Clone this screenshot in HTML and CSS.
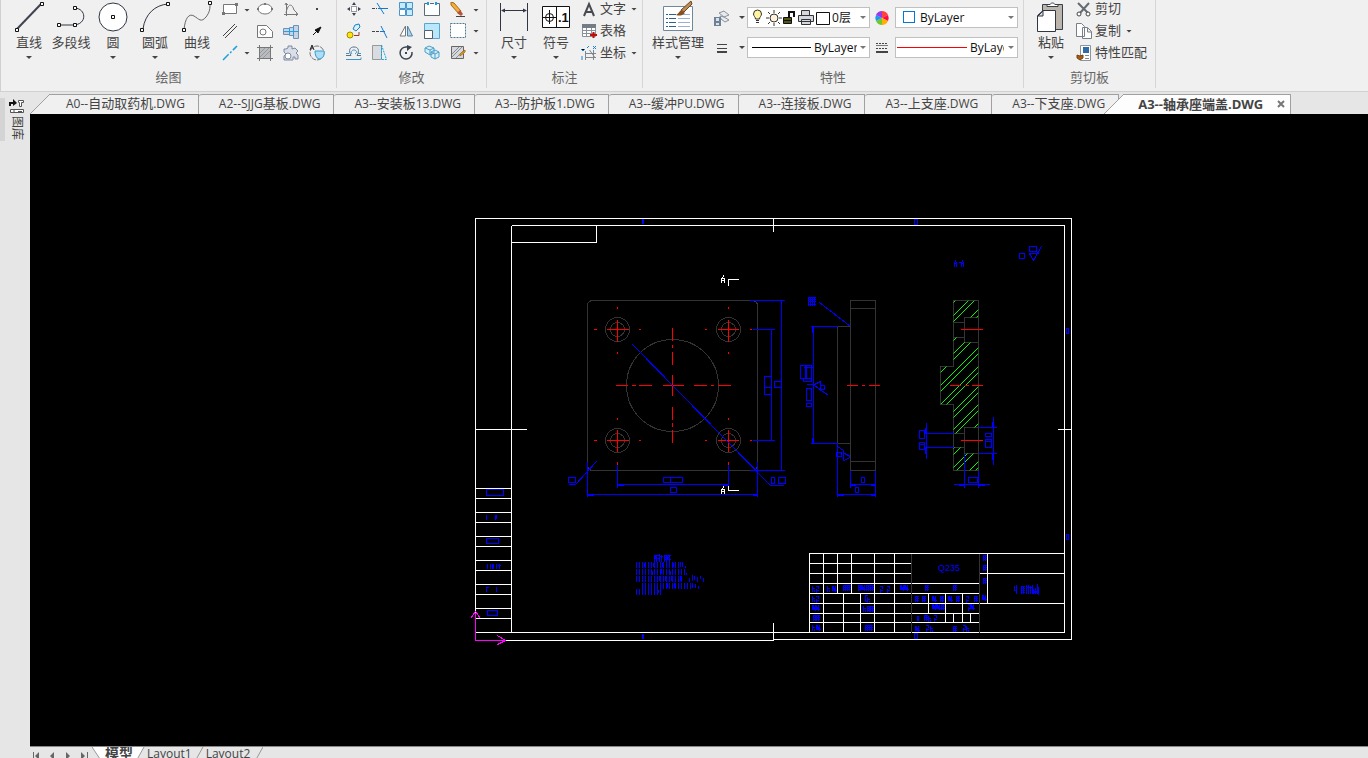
FILE: index.html
```html
<!DOCTYPE html>
<html lang="zh-CN">
<head>
<meta charset="utf-8">
<title>A3--轴承座端盖.DWG</title>
<link rel="stylesheet" href="styles.css">
</head>
<body>
<header class="ribbon">
  <section class="group">
    <div class="group-body draw-body">
      <button class="big"><svg width="30" height="32" viewBox="0 0 30 32"><path class="ink2" d="M3 29L27 4"/><path class="node" d="M1.500 28.500h3v3h-3zM26.500 2.500h3v3h-3z"/></svg><span>直线</span><i class="arrow"></i></button>
      <button class="big"><svg width="30" height="32" viewBox="0 0 30 32"><path class="ink" d="M2 25h15M19 8c12 1 12 17-2 17"/><path class="node" d="M1.500 23.500h3v3h-3zM17.500 23.500h3v3h-3zM17.500 6.500h3v3h-3z"/></svg><span>多段线</span></button>
      <button class="big"><svg width="30" height="32" viewBox="0 0 30 32"><circle class="ink" cx="15" cy="17" r="14"/><path class="node" d="M13.500 15.500h3v3h-3z"/></svg><span>圆</span><i class="arrow"></i></button>
      <button class="big"><svg width="30" height="32" viewBox="0 0 30 32"><path class="ink" d="M3 29C5 14 15 5 28 4"/><path class="node" d="M.500 28.500h3v3h-3zM26.500 2.500h3v3h-3z"/></svg><span>圆弧</span><i class="arrow"></i></button>
      <button class="big"><svg width="30" height="32" viewBox="0 0 30 32"><path class="ink gray-ink" d="M2 30C3 18 7 13 12 16C17 19 19 23 24 17C28 12 28 8 28 4"/><path class="node" d="M.500 28.500h3v3h-3zM26.500 1.500h3v3h-3z"/></svg><span>曲线</span><i class="arrow"></i></button>
      <div class="icons draw-icons">
        <button class="small" aria-label="矩形"><svg width="16" height="16"><path class="thin" fill="#fff" d="M1.500 2.500h13v9h-13z"/><path class="dot" d="M0 10h3v3H0zM13 1h3v3h-3z"/></svg></button><i class="arrow"></i>
        <button class="small" aria-label="椭圆"><svg width="16" height="16"><ellipse class="thin" fill="#fff" cx="8" cy="7" rx="7" ry="5"/><path class="dot" d="M0 6h2v2H0zM14 6h2v2h-2zM7 1h2v2H7z"/></svg></button>
        <button class="small" aria-label="函数曲线"><svg width="16" height="16"><path class="thin" fill="none" d="M3.500 1v13M1 12.500h14M3 11C5 1 9 1 11 8l3 3M2 3l1-2 2 2M13 11l2 1-2 2"/></svg></button>
        <button class="small" aria-label="点"><svg width="16" height="16"><path fill="#444" d="M7 6h2v2H7z"/></svg></button>
        <button class="small" aria-label="双线"><svg width="16" height="16"><path class="thin dark" d="M1 13L13 1M3 15L15 3"/></svg></button><i></i>
        <button class="small" aria-label="孔"><svg width="16" height="16"><path class="thin" fill="#fff" d="M.500 2.500h9l6 6v6H.500z"/><circle class="thin" fill="none" cx="6" cy="9" r="3"/></svg></button>
        <button class="small" aria-label="轴"><svg width="16" height="16"><path fill="#c8d4e6" stroke="#7890b0" d="M.5 5.500h6v-1h4v-2h5v13h-5v-3h-4v-1h-6z"/><path stroke="#2d9fe0" d="M0 8.500h16M6.500 5v7M10.500 3v11"/></svg></button>
        <button class="small" aria-label="箭头"><svg width="16" height="16"><path fill="#111" stroke="#111" d="M12 4L6 7l3 3zM4 12l5-5"/></svg></button>
        <button class="small" aria-label="构造线"><svg width="16" height="16"><path stroke="#18a0e0" stroke-width="1.500" stroke-dasharray="8 2 2 2" d="M1 15L15 1"/></svg></button><i class="arrow"></i>
        <button class="small" aria-label="填充"><svg width="16" height="16"><path fill="#b8bcc0" stroke="#777" d="M2.500 2.500h11v11h-11zM0 2.500h16M0 13.500h16M2.500 0v16M13.500 0v16"/><path stroke="#999" d="M3 8l5-5M3 12l9-9M6 13l7-7"/></svg></button>
        <button class="small" aria-label="齿轮"><svg width="16" height="16"><path fill="#d9dee8" stroke="#7c8aa0" d="M5 1h4v3l3-1 3 3-2 2 2 2v4h-3v-2h-2v3H1v-4l2-2-2-2V4h2l2-1z"/><circle cx="5" cy="11" r="3" fill="#fff" stroke="#7c8aa0"/></svg></button>
        <button class="small" aria-label="局部视图"><svg width="16" height="16"><circle class="thin" fill="none" stroke-dasharray="5 1" cx="8" cy="8" r="7"/><path fill="#a9ddf8" stroke="#389cd0" d="M6 6h9c1 5-2 8-5 8-3-1-4-4-4-8z"/><path fill="none" stroke="#222" d="M1 5l2-5 2 5M2 3h2"/></svg></button>
      </div>
    </div>
    <h2>绘图</h2>
  </section>
  <section class="group">
    <div class="group-body modify-body">
      <div class="icons modify-icons">
        <button class="small" aria-label="移动"><svg width="16" height="16"><path fill="#3c4350" d="M8 0l2 3H6zM8 14l2-3H6zM1 7l3-2v4zM15 7l-3-2v4z"/><path stroke="#3c4350" stroke-dasharray="1 1" fill="#fff" d="M5.500 4.500h5v5h-5z"/></svg></button>
        <button class="small" aria-label="修剪"><svg width="16" height="16"><path stroke="#444" stroke-dasharray="3 1" d="M0 6.500h5"/><path stroke="#1478d0" d="M6 6.500h10M5 1l7 11"/></svg></button>
        <button class="small" aria-label="阵列"><svg width="16" height="16"><path fill="#c6eaff" stroke="#4a94c6" d="M1.500.500h6v6h-6zM8.500.500h6v6h-6zM8.500 7.500h6v6h-6z"/><path fill="#fff" stroke="#4a94c6" d="M1.500 7.500h6v6h-6z"/></svg></button>
        <button class="small" aria-label="打断"><svg width="16" height="16"><path fill="#fff" stroke="#5d6a78" d="M4 1.500H.5v12h15v-12H12M6 1.500h4"/><path fill="#18a0e0" d="M3 0h2v3H3zM11 0h2v3h-2z"/></svg></button>
        <button class="small" aria-label="删除"><svg width="16" height="16"><path fill="#f2ae3c" stroke="#a86818" d="M1 0l3 1 7 8-2 3-8-9z"/><path fill="#b3543a" d="M10 8l3 4-2 2-4-3z"/><path stroke="#444" d="M6 14.500h9"/></svg></button><i class="arrow"></i>
        <button class="small" aria-label="复制对象"><svg width="16" height="16"><path fill="#d6f0ff" stroke="#1980c4" d="M7 6l2-4 4-1 1 3-4 4z"/><circle cx="4" cy="12" r="3" fill="#ffe40c" stroke="#a08b00"/><path fill="none" stroke="#9b3434" d="M8 12.500h5V9"/></svg></button>
        <button class="small" aria-label="延伸"><svg width="16" height="16"><path stroke="#444" stroke-dasharray="3 1" d="M0 8.500h8"/><path stroke="#1478d0" d="M9 3l6 12M8 8.500h5"/></svg></button>
        <button class="small" aria-label="镜像"><svg width="16" height="16"><path fill="#fff" stroke="#777" d="M7.500 3v10H2z"/><path fill="#a8d4ef" stroke="#53819e" d="M9.500 3v10h5z"/></svg></button>
        <button class="small" aria-label="缩放"><svg width="16" height="16"><path fill="#b9e7fc" stroke="#58a6ce" d="M.5.500h15v15H.500z"/><path fill="#fff" stroke="#55616d" d="M.500 7.500h8v8h-8z"/></svg></button>
        <button class="small" aria-label="选择"><svg width="16" height="16"><path fill="#fff" stroke="#4f7895" stroke-dasharray="2 1" d="M.500.500h15v14H.500z"/></svg></button><i class="arrow"></i>
        <button class="small" aria-label="偏移"><svg width="16" height="16"><path fill="none" stroke="#5b7185" d="M0 10.500h5C2 5 4 2 8 2s6 3 3 8.500h4"/><path fill="none" stroke="#3c95ca" d="M0 14.500h15v-2M0 8.500h3M12 8.500h3M6 9C4 7 6 5 8 5s4 2 1 4"/></svg></button>
        <button class="small" aria-label="拉伸"><svg width="16" height="16"><path fill="#d8dce0" stroke="#999" d="M.500.500h9v14h-9z"/><path fill="none" stroke="#16a4dd" stroke-dasharray="2 1" d="M9.500 0l5 14.500h-5z"/></svg></button>
        <button class="small" aria-label="旋转"><svg width="16" height="16"><path fill="none" stroke="#3c4350" stroke-width="1.500" d="M9 2a6 6 0 1 0 5 5"/><path fill="#3c4350" d="M9 0l5 2-5 4zM7 7h2v2H7z"/></svg></button>
        <button class="small" aria-label="三维"><svg width="16" height="16"><path fill="#d4eefa" stroke="#4c9fc8" d="M1 3l4-2 5 2v5l-4 2-5-3zM1 3l5 2v5M6 5l4-2M7 7l4-2 4 2v5l-4 2-4-2zM7 7l4 2v5M11 9l4-2"/></svg></button>
        <button class="small" aria-label="编辑填充"><svg width="16" height="16"><path fill="#d5d8dc" stroke="#666" d="M1.500 1.500h12v12h-12z"/><path stroke="#898e94" d="M2 9l7-7M2 12l10-10M6 13l7-7"/><path fill="#e7a93a" stroke="#ad7418" d="M15 5l-5 4v2l5-4z"/></svg></button><i class="arrow"></i>
      </div>
    </div>
    <h2>修改</h2>
  </section>
  <section class="group">
    <div class="group-body note-body">
      <button class="big"><svg width="30" height="32" viewBox="0 0 30 32"><path class="ink" d="M1.500 3v28M28.500 3v28M3 10.500h24"/><path fill="#303642" d="M2 10.500l4-2v4zM28 10.500l-4-2v4z"/></svg><span>尺寸</span><i class="arrow"></i></button>
      <button class="big"><svg width="30" height="32" viewBox="0 0 30 32"><path fill="#fff" stroke="#111" d="M1.500 6.500h27v21h-27zM15.500 6v21"/><circle cx="8.500" cy="17.500" r="4" fill="none" stroke="#111"/><path stroke="#111" d="M2 17.500h13M8.500 10v14"/><text class="tol" x="17" y="22">.1</text></svg><span>符号</span><i class="arrow"></i></button>
      <div class="rows">
        <button class="row"><svg width="16" height="16"><path fill="none" stroke="#474b50" stroke-width="2" d="M3 15L8 3l5 12M5 11h6"/></svg><span>文字</span><i class="arrow"></i></button>
        <button class="row"><svg width="16" height="16"><path fill="#fff" stroke="#8b9198" d="M1.500 1.500h13v12h-13zM1 7.500h14M1 10.500h14M5.500 4v10M10.500 4v10"/><path fill="#747c87" d="M1 1h14v4H1z"/><path stroke="#c20b0b" stroke-width="2" d="M9 12h7M12.500 9v6"/></svg><span>表格</span></button>
        <button class="row"><svg width="16" height="16"><path fill="none" stroke="#80868c" d="M4.500 6v9M4 8.500h11M4 12.500h11M8.500 5l5 7M12.500 5v10"/><path stroke="#1884d4" d="M0 4l2 2 2-2M12 1l3 3M15 1l-3 3M1 11v4M6 3l2-2"/></svg><span>坐标</span><i class="arrow"></i></button>
      </div>
    </div>
    <h2>标注</h2>
  </section>
  <section class="group props">
    <div class="group-body props-body">
      <button class="big wide"><svg width="32" height="32" viewBox="0 0 32 32"><path fill="#fff" stroke="#71879b" d="M1.500 6.500h29v24h-29z"/><path stroke="#2c5f8e" stroke-dasharray="2 1 8 0" d="M4 14.500h10M4 18.500h10M4 22.500h10M4 26.500h10"/><path stroke="#9bb0d0" d="M16 14.500h12M16 18.500h12M16 22.500h12M16 26.500h12"/><path fill="#bd8b54" stroke="#6e4521" d="M29 1l1 3-8 8-3-2z"/><path fill="#86501e" d="M19 10l4 3c-3 3-6 3-9 2 2-1 3-3 5-5z"/></svg><span>样式管理</span><i class="arrow"></i></button>
      <div class="prop-grid">
        <button class="small" aria-label="图层"><svg width="16" height="16"><path fill="#e7eaee" stroke="#8a929b" d="M5 3l5-2 5 4-5 2zM6 6l4 1 5 3-4 2-4-3z"/><path fill="#6f8295" d="M0 7h7v9H0z"/><path fill="#d5e2ec" d="M2 8h3v3H2zM2 13h3v2H2z"/></svg></button><i class="arrow"></i>
        <div class="combo layer"><select aria-label="图层"><option>0层</option></select>
          <svg class="combo-art" width="80" height="18"><path fill="#fff3a0" stroke="#333" d="M2.500 6a4 4 0 1 1 8 0c0 2-2 3-2 5h-4c0-2-2-3-2-5zM5 12.500h3M5 14.500h3"/><circle cx="23" cy="10" r="4" fill="#fff3dc" stroke="#333"/><path stroke="#333" d="M23 2v3M23 15v3M15 10h3M28 10h3M17 4l2 2M29 4l-2 2M17 16l2-2M29 16l-2-2"/><path fill="#55551a" stroke="#111" d="M32.500 9.500h8v6h-8zM32 12.500h8"/><path fill="none" stroke="#111" stroke-width="2" d="M38 9V4h5v5"/><path fill="#d4d7dd" stroke="#333" d="M50.500 7V2.500h8V7M47.500 7.500h15v6h-15zM50.500 11.500h9v5h-9z"/><path fill="#fff" stroke="#111" d="M65.500 4.500h13v12h-13z"/></svg><i class="arrow"></i></div>
        <button class="small" aria-label="颜色"><svg width="16" height="16" viewBox="-8 -8 16 16"><path fill="#ff4338" d="M0 0V-7A7 7 0 0 1 6-3z"/><path fill="#ff0a47" d="M0 0L6-3A7 7 0 0 1 6 3z"/><path fill="#ffb000" d="M0 0L6 3A7 7 0 0 1 0 7z"/><path fill="#70c82c" d="M0 0V7A7 7 0 0 1-6 3z"/><path fill="#199ceb" d="M0 0L-6 3A7 7 0 0 1-6-3z"/><path fill="#9b37e8" d="M0 0L-6-3A7 7 0 0 1 0-7z"/></svg></button>
        <div class="combo color"><select aria-label="颜色"><option>ByLayer</option></select><span class="combo-art swatch"></span><i class="arrow"></i></div>
        <button class="small" aria-label="线宽"><svg width="16" height="16"><path stroke="#444" d="M3 4.500h10M3 8.500h10"/><path stroke="#444" stroke-width="2" d="M3 12h10"/></svg></button><i class="arrow"></i>
        <div class="combo line"><select aria-label="线型"><option>ByLayer</option></select><span class="combo-art rule"></span><i class="arrow"></i></div>
        <button class="small" aria-label="线型管理"><svg width="14" height="16"><path stroke="#444" stroke-dasharray="2 1" d="M1 3.500h12M1 8.500h12"/><path stroke="#777" d="M1 5.500h12"/><path stroke="#444" stroke-width="2" d="M1 12h12"/></svg></button>
        <div class="combo line red-line"><select aria-label="线宽"><option>ByLayer</option></select><span class="combo-art rule"></span><i class="arrow"></i></div>
      </div>
    </div>
    <h2>特性</h2>
  </section>
  <section class="group">
    <div class="group-body clip-body">
      <button class="big"><svg width="30" height="32" viewBox="0 0 30 32"><path fill="#bcb5ab" stroke="#36404c" d="M6.500 4.500h20v25h-20z"/><path fill="#fff" stroke="#36404c" d="M11 6.500v-2h3c1-2 4-2 5 0h3v2z"/><path fill="#fff" stroke="#303642" d="M7 10.500h12.500v21h-18v-16z"/><path fill="#ddd" stroke="#303642" d="M7 11v5H2z"/></svg><span>粘贴</span><i class="arrow"></i></button>
      <div class="rows">
        <button class="row"><svg width="16" height="16"><path stroke="#646b72" stroke-width="2" d="M2 2l10 10M13 2L4 12"/><circle cx="3" cy="13" r="2" fill="#fff" stroke="#444"/><circle cx="12" cy="13" r="2" fill="#fff" stroke="#444"/></svg><span>剪切</span></button>
        <button class="row"><svg width="16" height="16"><path fill="#fff" stroke="#777f88" d="M.500.500h5l3 3v10h-8zM6.500 4.500h5l4 4v7h-9zM11.500 5v4h4"/></svg><span>复制</span><i class="arrow"></i></button>
        <button class="row"><svg width="16" height="16"><path fill="#fff" stroke="#8c949c" d="M4.500.500h10v15h-10z"/><path fill="#2f6da9" d="M7 2h6v6H7z"/><path stroke="#888" d="M9 10.500h4M9 13.500h4"/><path fill="#a55c13" stroke="#7b430c" d="M1 10l3 1 3-1v3l-3 2-3-2z"/></svg><span>特性匹配</span></button>
      </div>
    </div>
    <h2>剪切板</h2>
  </section>
</header>
<div class="workspace">
  <aside class="side">
    <button class="library"><svg width="16" height="16"><path fill="none" stroke="#111" stroke-width="2" d="M1 8V5h5"/><path fill="#111" d="M4 1l4 4-4 3z"/><path fill="#fff" stroke="#555" d="M9.500 2.500h5v2h-2v4h-2v-4h-1zM1.500 11.500h13v3h-13z"/><path stroke="#555" d="M5 11v4M9 13.500h4"/></svg><span>图库</span></button>
  </aside>
  <main class="main">
    <nav class="files">
      <button class="file first"><svg class="slant" width="20" height="20"><path d="M0 20L20 0V20z"/><path class="edge" d="M0 20L20 0"/></svg>A0--<span>自动取药机</span>.DWG</button>
      <button class="file">A2--SJJG<span>基板</span>.DWG</button>
      <button class="file">A3--<span>安装板</span>13.DWG</button>
      <button class="file">A3--<span>防护板</span>1.DWG</button>
      <button class="file">A3--<span>缓冲</span>PU.DWG</button>
      <button class="file">A3--<span>连接板</span>.DWG</button>
      <button class="file">A3--<span>上支座</span>.DWG</button>
      <button class="file">A3--<span>下支座</span>.DWG</button>
      <button class="file active"><svg class="slant" width="20" height="20"><path d="M0 20L20 0V20z"/><path class="edge" d="M0 20L20 0"/></svg>A3--<span>轴承座端盖</span>.DWG<svg class="close" width="8" height="8"><path d="M1 1l6 6M7 1L1 7"/></svg></button>
    </nav>
    <div class="canvas">
      <svg class="drawing" viewBox="30 114 1338 632" role="img" aria-label="轴承座端盖">
        <defs>
          <g id="m1"><path d="M0 0v6M0 3h2M2 4v2"/></g>
          <g id="m2"><path d="M0 1h3M3 0v3M1 3v4M1 5h2"/></g>
          <g id="m3"><path d="M0 1h4M1 0v6M3 1v5M0 3h4M0 5h4"/></g>
          <g id="m4"><path d="M0 0v5M1 0v5M3 0v6M2 2v2M0 5h4"/></g>
          <clipPath id="section"><path d="M953 300h25v17h-14v5h-11zM953 337h11v5h14v85h-14v6h-11v-29h-13v-38h13zM953 447h11v6h14v17h-25z"/></clipPath>
        </defs>
        <g transform="translate(.5 .5)">
          <g class="gray">
            <rect x="587" y="300" width="170" height="170" rx="5"/>
            <circle cx="672" cy="385" r="46"/>
            <circle cx="617" cy="329" r="12"/><circle cx="617" cy="329" r="7"/>
            <circle cx="728" cy="329" r="12"/><circle cx="728" cy="329" r="7"/>
            <circle cx="617" cy="440" r="12"/><circle cx="617" cy="440" r="7"/>
            <circle cx="728" cy="440" r="12"/><circle cx="728" cy="440" r="7"/>
            <path d="M850 300h25v170h-25zM850 308h25M850 461h25M850 326h-13v117h13"/>
            <path d="M953 300h25v170h-25v-66h-13v-38h13zM978 317h-14v25h14M953 322h11M953 337h11M978 427h-14v26h14M953 433h11M953 447h11"/>
          </g>
          <g class="green" clip-path="url(#section)"><path d="M930 325L990 265M930 338L990 278M930 344L990 284M930 357L990 297M930 363L990 303M930 376L990 316M930 382L990 322M930 395L990 335M930 401L990 341M930 414L990 354M930 420L990 360M930 434L990 374M930 440L990 380M930 452L990 392M930 458L990 398M930 471L990 411M930 477L990 417M930 490L990 430M930 496L990 436M930 509L990 449M930 515L990 455"/></g>
          <g class="red">
            <path d="M606 329h22M617 319v22M593 329h3M638 329h2M617 306v2M617 351v2M717 329h21M728 319v22M704 329h2M749 329h2M728 306v2M728 351v2"/>
            <path d="M606 440h22M617 429v22M593 440h3M638 440h2M617 417v2M617 461v3M717 440h21M728 429v22M704 440h2M749 440h2M728 417v2M728 461v3"/>
            <path d="M672 327v13M672 344v3M672 351v13M672 374v21M672 406v13M672 422v4M672 429v13M615 385h12M631 385h4M638 385h13M662 385h21M693 385h13M710 385h3M717 385h13"/>
            <path d="M846 385h11M861 385h3M868 385h11M960 329h22M960 440h22M949 385h11M964 385h4M971 385h11"/>
          </g>
          <g class="blue">
            <path d="M632 344L770 485h13M771 477h3v6h-3zM778 477h7v6h-7z"/>
            <path d="M749 300h35M752 329h22M752 440h22M749 470h35M781 300v170M771 329v111M764 376h7v18h-7zM764 387h7M774 381h7v6h-7z"/>
            <path d="M617 464v23M728 464v20M617 484h111M617 485h6M722 485h6M663 477h19v5h-19zM670 477v5M587 461v35M757 461v35M587 494h170M587 495h6M752 495h5M670 487h6v5h-6zM596 461L575 484h-7M568 477h7v5h-7z"/>
            <path d="M810 326h27M813 326v117M812 326v6M812 437v6M810 443h27M819 302L850 326M837 443v53M850 470v17M875 470v26M850 484h25M850 485h5M870 485h5M837 494h38M837 495h6M870 495h5M861 477h3v5h-3zM855 487h3v5h-3z"/>
            <path d="M800 365h11v13h-11zM805 365v13M806 365v13M803 367h10M803 377v4h8v-4M806 384h6M806 388h5v12h-5zM806 403h5v3h-5zM814 385L828 395M814 384L820 381v9M820 385h4v4h-4zM836 452h5v4h-5zM837 446L843 450v10L850 457M844 453L850 456"/>
            <path d="M807 297h8M807 299h8M807 301h8M807 304h8M808 297v8M810 297v8M812 297v8M814 297v8"/>
            <path d="M926 422v36M925 427v6M925 447v6M923 433h30M923 447h30M919 430h5v8h-5zM919 442h5v7h-5zM919 444h5M993 416v48M992 421v6M992 453v6M978 427h18M978 453h18M985 433h6v3h-6zM985 439h6v8h-6zM985 441h6M964 453v34M978 470v17M953 484h36M958 485h6M978 485h6M968 477h9v5h-9z"/>
            <path d="M954 261v5M956 261v5M954 263h2M955 259v2M958 262h2M961 261v5M963 261v5M961 263h2M962 259v2M1019 253h5v5h-5zM1029 246h7v5h-7zM1029 253h9M1029 253L1033 260L1041 246"/>
            <path d="M642 218v5M643 218v5M642 633v5M643 633v5M914 219h3v5h-3zM914 633h3v5h-3zM1066 328h2v5h-2zM1066 534h2v5h-2z"/>
            <path d="M486 489h17v6h-17zM486 514v5M495 514v5M496 514v4M486 538h12v5h-12zM487 563v5M490 563v5M492 563v5M493 563v5M496 563v5M499 563v5M497 565h3M486 586v5M486 587h2M496 586v5M487 610h10v5h-10z"/>
            <path class="ticks" d="M635 564h43M635 571h50M635 578h46M641 585h49M635 591h25"/>
            <path d="M644 562v4M653 562v4M662 562v4M673 562v4M680 561v5M682 561v5M685 565v2M642 568v6M652 570v4M661 568v5M670 570v4M681 568v5M686 572v2M659 575v5M665 575v5M671 575v5M680 575v5M689 577v4M692 574v6M694 575v4M697 576v5M700 575v3M703 577v4M667 582v5M674 582v5M692 582v5M695 583v4M698 585v3M648 588v6M658 589v3"/>
            <path d="M653 555h5M653 558h5M654 554v7M656 554v7M655 554v4M659 553v8M658 556h4M661 554v7M663 555h7M664 554v7M666 554v7M667 554v4M669 555v6M663 559h7M663 557h6"/>
            <use href="#m1" x="812" y="585"/><use href="#m2" x="815" y="585"/><use href="#m1" x="827" y="585"/><use href="#m4" x="832" y="585"/><use href="#m3" x="842" y="584"/><use href="#m3" x="846" y="584"/><use href="#m3" x="857" y="584"/><use href="#m4" x="861" y="584"/><use href="#m3" x="865" y="584"/><use href="#m3" x="869" y="584"/><use href="#m2" x="879" y="585"/><use href="#m2" x="886" y="585"/><use href="#m4" x="900" y="584"/><use href="#m4" x="904" y="584"/><use href="#m3" x="924" y="584"/><use href="#m3" x="952" y="584"/>
            <use href="#m1" x="812" y="595"/><use href="#m2" x="815" y="595"/><path d="M864 595h3M865 595v6M864 601h3"/><use href="#m1" x="867" y="596"/><use href="#m3" x="914" y="595"/><use href="#m3" x="921" y="595"/><use href="#m4" x="932" y="595"/><use href="#m3" x="939" y="595"/><use href="#m4" x="948" y="595"/><use href="#m3" x="955" y="595"/><use href="#m2" x="965" y="595"/><use href="#m3" x="973" y="595"/>
            <use href="#m4" x="812" y="604"/><use href="#m4" x="815" y="604"/><use href="#m1" x="863" y="605"/><use href="#m3" x="866" y="605"/><use href="#m3" x="869" y="605"/><use href="#m4" x="932" y="603"/><use href="#m4" x="936" y="603"/><use href="#m3" x="940" y="603"/><use href="#m2" x="967" y="603"/><use href="#m4" x="970" y="603"/>
            <use href="#m3" x="812" y="614"/><use href="#m3" x="815" y="614"/><path d="M917 615v5M918 615v5"/><use href="#m3" x="923" y="614"/><use href="#m1" x="928" y="615"/><use href="#m2" x="933" y="614"/>
            <use href="#m1" x="812" y="624"/><use href="#m4" x="816" y="624"/><use href="#m3" x="864" y="624"/><use href="#m3" x="868" y="624"/><use href="#m4" x="915" y="625"/><use href="#m2" x="925" y="624"/><use href="#m1" x="930" y="625"/><use href="#m3" x="952" y="625"/><use href="#m2" x="962" y="624"/><use href="#m1" x="966" y="625"/>
            <use href="#m3" x="982" y="554"/><use href="#m3" x="982" y="564"/><use href="#m3" x="982" y="577"/><use href="#m4" x="982" y="594"/>
            <path d="M1014 585v5h2v-6M1016 590v3M1020 586h4M1020 588h4M1020 590h4M1020 592h4M1021 585v8M1023 585v8M1026 584v9M1028 584v9M1030 585v8M1026 587h6M1032 584v9M1033 588v5M1035 587v6M1037 583v10M1038 586v8M1031 591h7M1031 592h7"/>
          </g>
          <g class="white">
            <path d="M475 640V218H1071V639H773M475 640H773M511 225H1064V632M511 225V632M475 632H1064M511 242h85v-17M773 218v13M773 622v18M475 429h51M1057 429h14"/>
            <path d="M475 488h36M475 498h36M475 512h36M475 522h36M475 536h36M475 546h36M475 560h36M475 570h36M475 584h36M475 594h36M475 608h36M475 618h36"/>
            <path d="M728 285v-6h10M728 485v5h10M721 282v-4h3v4M721 280h3M722 278l1-3M721 493v-4h3v4M721 491h3M722 489l1-3"/>
            <path d="M809 632V553H1064M809 563h102M809 573h102M809 583h170M809 593h170M809 603h255M809 613h170M809 622h170M979 573h85M823 553v79M837 553v40M851 553v40M874 553v79M894 553v79M843 593v39M860 593v39M987 553v50M928 593v20M945 593v29M962 593v29M953 613v9M970 613v9"/>
          </g>
          <path class="gray" d="M911 553v79M979 553v79"/>
          <path class="magenta" d="M475 612v28h30M470 618L475 611L480 618M497 635L505 640L497 644"/>
        </g>
        <text class="material" x="949" y="571">Q235</text>
      </svg>
    </div>
    <nav class="layouts">
      <div class="steps">
        <button aria-label="首页"><svg width="8" height="8"><path d="M1 0v8h1V0zM7 0v8L3 4z"/></svg></button>
        <button aria-label="上一页"><svg width="8" height="8"><path d="M6 0v8L2 4z"/></svg></button>
        <button aria-label="下一页"><svg width="8" height="8"><path d="M2 0v8l4-4z"/></svg></button>
        <button aria-label="末页"><svg width="8" height="8"><path d="M1 0v8l4-4zM7 0v8h1V0z"/></svg></button>
      </div>
      <svg class="divider model" width="12" height="18"><path class="fill" d="M0 0h12v18z"/><path d="M0 0l12 18"/></svg>
      <button class="layout current">模型</button>
      <svg class="divider" width="12" height="18"><path class="fill" d="M0 0h10L0 18z"/><path d="M10 0L0 18"/></svg>
      <button class="layout">Layout1</button>
      <svg class="divider" width="12" height="18"><path d="M10 0L0 18"/></svg>
      <button class="layout">Layout2</button>
      <svg class="divider" width="12" height="18"><path d="M12 0L2 18"/></svg>
    </nav>
  </main>
</div>
</body>
</html>
```
FILE: styles.css
```css
* { box-sizing: border-box; }
body {
  margin: 0;
  height: 100vh;
  display: flex;
  flex-direction: column;
  overflow: hidden;
  background: #e6e6e6;
  color: #444;
  font: 13px/18px Roboto, "Noto Sans CJK SC", sans-serif;
}
button {
  margin: 0;
  padding: 0;
  border: 0;
  background: none;
  color: inherit;
  font: inherit;
  white-space: nowrap;
}
svg { display: block; flex: none; }

.ribbon {
  display: flex;
  flex: none;
  padding-bottom: 3px;
  background: #f0f0f0;
  border-bottom: 1px solid #d0d0d0;
  border-left: 1px solid #d0d0d0;
}
.group {
  display: flex;
  flex-direction: column;
  border-right: 1px solid #d6d6d6;
}
.group h2 {
  margin: 0;
  color: #666;
  font-size: 13px;
  font-weight: 400;
  line-height: 20px;
  text-align: center;
}
.group-body { display: flex; height: 68px; }
.draw-body { padding: 0 6px 0 7px; }
.modify-body { padding: 0 5px 0 4px; }
.note-body { padding: 0 5px 0 6px; }
.props-body { padding: 0 5px 0 9px; }
.clip-body { padding: 0 8px 0 6px; }

.big {
  width: 42px;
  display: flex;
  flex-direction: column;
  align-items: center;
}
.big.wide { width: 52px; }
.big span { margin-top: 2px; }
.big .arrow { margin-top: 4px; }
.arrow {
  width: 6px;
  height: 3px;
  flex: none;
  background: #444;
  clip-path: polygon(0 0, 100% 0, 50% 100%);
}
.ink { fill: none; stroke: #303642; stroke-width: 1; }
circle.ink { fill: #fff; }
.gray-ink { stroke: #666; }
.ink2 { stroke: #3f4354; stroke-width: 2; }
.node { fill: #fff; stroke: #111; }
.thin { stroke: #777; }
.thin.dark { stroke: #444; }
.dot { fill: #777; }
.tol { font: bold 13px "Liberation Sans", sans-serif; fill: #111; }

.icons {
  display: grid;
  grid-template-rows: 20px 22px 22px;
  align-items: center;
  justify-items: center;
  align-content: start;
}
.draw-icons { grid-template-columns: 24px 10px repeat(3, 26px); }
.modify-icons { grid-template-columns: repeat(5, 26px) 10px; }

.rows { display: flex; flex-direction: column; padding-left: 4px; }
.row {
  height: 22px;
  padding-bottom: 4px;
  display: flex;
  align-items: center;
  gap: 3px;
}
.row .arrow { margin-left: 2px; }

.prop-grid {
  display: grid;
  grid-template-columns: 36px 6px 124px 24px 124px;
  grid-template-rows: 21px 21px;
  row-gap: 9px;
  padding-top: 7px;
  align-items: center;
  justify-items: center;
}
.prop-grid > .combo { justify-self: stretch; }
.prop-grid > .arrow { margin-right: 2px; }
.combo { position: relative; height: 21px; margin-left: 1px; }
.combo select {
  appearance: none;
  width: 100%;
  height: 100%;
  border: 1px solid #c0c0c0;
  border-radius: 0;
  background: #fff;
  color: #111;
  padding: 0 12px 0 24px;
  font: 12px "Open Sans", "Noto Sans CJK SC", sans-serif;
}
.combo.layer select { padding-left: 84px; }
.combo.line select { padding-left: 66px; }
.combo.red-line select { padding-left: 74px; padding-right: 13px; }
.combo .arrow { position: absolute; right: 4px; top: 9px; background: #777; }
.combo-art { position: absolute; left: 4px; top: 1px; pointer-events: none; }
.swatch { left: 8px; top: 4px; width: 12px; height: 12px; border: 1px solid #0078d7; }
.rule { left: 5px; top: 10px; width: 59px; height: 1px; background: #000; }
.red-line .rule { left: 2px; width: 70px; background: #f00; }

.workspace { display: flex; flex: 1; min-height: 0; }
.side { width: 30px; flex: none; padding-top: 6px; }
.library {
  height: 43px;
  width: 25px;
  padding-left: 4px;
  border-left: 5px solid #d4d4d4;
  display: flex;
  flex-direction: column;
  align-items: center;
  gap: 2px;
}
.library span { writing-mode: vertical-rl; text-orientation: sideways; font-size: 12px; line-height: 14px; }
.main { flex: 1; min-width: 0; display: flex; flex-direction: column; }

.files { display: flex; height: 22px; flex: none; padding-top: 2px; }
.file {
  position: relative;
  height: 20px;
  padding: 0 13px 2px 20px;
  background: #f0f0f0;
  border: solid #a0a0a0;
  border-width: 1px 1px 0 0;
  border-top-left-radius: 3px;
  font: 12px/16px "Open Sans", "Noto Sans CJK SC", sans-serif;
}
.file span { font-size: 13px; }
.file.first { margin-left: 20px; padding-left: 16px; border-radius: 0; }
.file.active {
  margin-left: 5px;
  padding-left: 14px;
  padding-right: 5px;
  display: flex;
  align-items: center;
  background: #fdfdfd;
  border-radius: 0;
  font-size: 13px;
  font-weight: 700;
}
.slant { position: absolute; right: 100%; top: -1px; fill: #f0f0f0; }
.active .slant { fill: #fdfdfd; }
.edge { stroke: #a0a0a0; }
.close { margin-left: 14px; stroke: #777; stroke-width: 2; }

.canvas { flex: 1; min-height: 0; background: #000; }
.drawing { width: 100%; height: 100%; shape-rendering: crispEdges; fill: none; }
.gray { stroke: #333; }
.green { stroke: #0f0; }
.red { stroke: #f00; }
.blue { stroke: #00f; }
.white { stroke: #fff; }
.magenta { stroke: #f0f; }
.ticks { stroke-width: 6; stroke-dasharray: 1 2; }
.material { fill: #00f; font: 9px "Liberation Sans", sans-serif; text-anchor: middle; }

.layouts {
  height: 12px;
  flex: none;
  display: flex;
  align-items: flex-start;
  overflow: hidden;
  border-top: 1px solid #888;
}
.steps { display: flex; gap: 8px; padding: 5px 4px 0 2px; fill: #666; }
.divider { stroke: #999; fill: none; }
.divider .fill { fill: #fff; stroke: none; }
.layout { padding: 0 1px; line-height: 14px; font-family: "Open Sans", "Noto Sans CJK SC", sans-serif; font-size: 12px; }
.layout.current { background: #fff; font-size: 14px; font-weight: 700; line-height: 12px; }
```
